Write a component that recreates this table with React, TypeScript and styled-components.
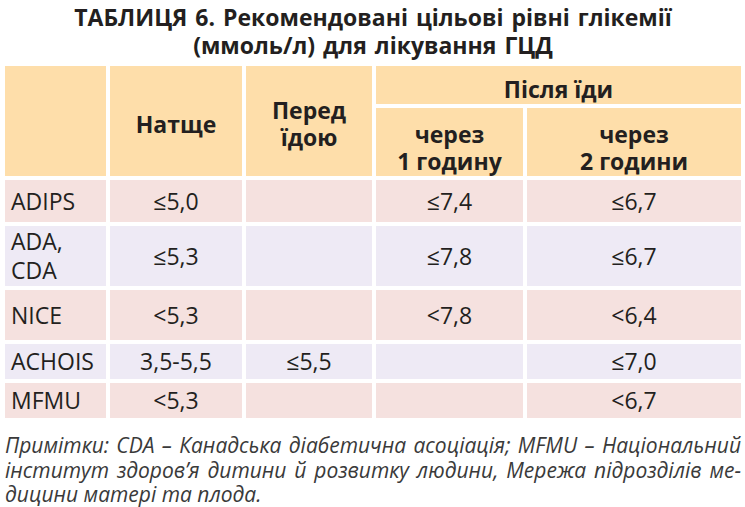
import React from "react";
import styled, { createGlobalStyle } from "styled-components";

const GlobalStyle = createGlobalStyle`
  html, body {
    margin: 0;
    padding: 0;
    background: #ffffff;
  }
  body {
    font-family: "Open Sans", "Noto Sans", sans-serif;
    color: #231f20;
  }
`;

const Page = styled.div`
  width: 745px;
  padding: 0 4px 0 5px;
  box-sizing: border-box;
`;

const Title = styled.h1`
  margin: 0;
  padding-top: 3px;
  font-size: 23px;
  font-weight: 700;
  line-height: 28px;
  word-spacing: 2px;
  text-align: center;
  color: #231f20;
`;

const Table = styled.div`
  margin-top: 7px;
  display: grid;
  grid-template-columns: 101px 132px 126px 147px 214px;
  grid-template-rows: 38px 68px 42px 60px 50px 35px 35px;
  gap: 4px;
`;

type Span = { $col?: string; $row?: string; $shift?: number };

const HeadCell = styled.div<Span>`
  background: #fedeaa;
  display: flex;
  align-items: center;
  justify-content: center;
  text-align: center;
  box-sizing: border-box;
  padding-top: ${(p) => p.$shift ?? 6}px;
  font-size: 23px;
  font-weight: 700;
  line-height: 27px;
  grid-column: ${(p) => p.$col ?? "auto"};
  grid-row: ${(p) => p.$row ?? "auto"};
`;

type CellProps = { $tone: "pink" | "lilac"; $left?: boolean };

const Cell = styled.div<CellProps>`
  background: ${(p) => (p.$tone === "pink" ? "#f5e1df" : "#eeeaf5")};
  display: flex;
  align-items: center;
  justify-content: ${(p) => (p.$left ? "flex-start" : "center")};
  padding: 0 ${(p) => (p.$left ? "6px" : "0")};
  font-size: 23px;
  font-weight: 400;
  line-height: 29px;
  color: #231f20;
`;

const Notes = styled.div`
  margin-top: 15px;
  font-size: 21px;
  font-style: italic;
  line-height: 24.5px;
  color: #3a3a3a;
`;

const NoteLine = styled.div<{ $justify?: boolean }>`
  text-align: ${(p) => (p.$justify ? "justify" : "left")};
  text-align-last: ${(p) => (p.$justify ? "justify" : "left")};
  white-space: nowrap;
`;

type Row = { name: React.ReactNode; fast: string; before: string; h1: string; h2: string };

const rows: Row[] = [
  { name: "ADIPS", fast: "≤5,0", before: "", h1: "≤7,4", h2: "≤6,7" },
  { name: <>ADA,<br />CDA</>, fast: "≤5,3", before: "", h1: "≤7,8", h2: "≤6,7" },
  { name: "NICE", fast: "<5,3", before: "", h1: "<7,8", h2: "<6,4" },
  { name: "ACHOIS", fast: "3,5-5,5", before: "≤5,5", h1: "", h2: "≤7,0" },
  { name: "MFMU", fast: "<5,3", before: "", h1: "", h2: "<6,7" },
];

export default function App() {
  return (
    <>
      <GlobalStyle />
      <Page>
        <Title>
          ТАБЛИЦЯ 6. Рекомендовані цільові рівні глікемії
          <br />
          (ммоль/л) для лікування ГЦД
        </Title>
        <Table>
          <HeadCell $col="1" $row="1 / 3" />
          <HeadCell $col="2" $row="1 / 3">Натще</HeadCell>
          <HeadCell $col="3" $row="1 / 3">
            Перед
            <br />
            їдою
          </HeadCell>
          <HeadCell $col="4 / 6" $row="1" $shift={8}>Після їди</HeadCell>
          <HeadCell $col="4" $row="2" $shift={12}>
            через
            <br />1 годину
          </HeadCell>
          <HeadCell $col="5" $row="2" $shift={12}>
            через
            <br />2 години
          </HeadCell>
          {rows.map((r, i) => {
            const tone = i % 2 === 0 ? "pink" : "lilac";
            return (
              <React.Fragment key={i}>
                <Cell $tone={tone} $left>{r.name}</Cell>
                <Cell $tone={tone}>{r.fast}</Cell>
                <Cell $tone={tone}>{r.before}</Cell>
                <Cell $tone={tone}>{r.h1}</Cell>
                <Cell $tone={tone}>{r.h2}</Cell>
              </React.Fragment>
            );
          })}
        </Table>
        <Notes>
          <NoteLine $justify>
            Примітки: CDA – Канадська діабетична асоціація; MFMU – Національний
          </NoteLine>
          <NoteLine $justify>
            інститут здоров’я дитини й розвитку людини, Мережа підрозділів ме-
          </NoteLine>
          <NoteLine>дицини матері та плода.</NoteLine>
        </Notes>
      </Page>
    </>
  );
}
